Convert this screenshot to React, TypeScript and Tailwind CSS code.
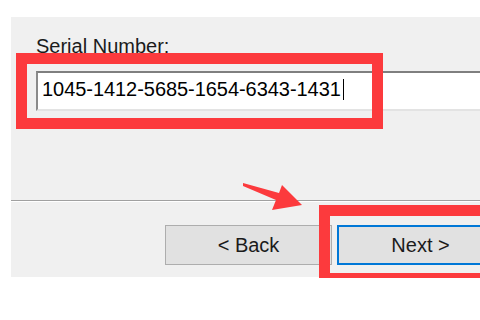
export default function App() {
  return (
    <div
      className="relative w-[480px] h-[320px] overflow-hidden bg-white text-black"
      style={{ fontFamily: '"Liberation Sans", Arial, sans-serif' }}
    >
      <div className="ml-[11px] mt-[17px] h-[260px] bg-[#f0f0f0] flex flex-col">
        <div className="pl-[25px] pt-[18px]">
          <div className="text-[20px] leading-[23px] text-[#1b1b1b]">Serial Number:</div>
          <div className="mt-[13px] h-[40px] w-[480px] bg-white border-t-2 border-l-2 border-b-2 border-t-[#7f7f7f] border-l-[#8a8a8a] border-b-[#e3e3e3] flex items-center pl-[4px] pb-[4px]">
            <span className="text-[20px] leading-[23px] tracking-[-0.05px]">1045-1412-5685-1654-6343-1431</span>
            <span className="ml-[2px] w-px h-[21px] bg-black" />
          </div>
        </div>

        <div className="mt-[89px] h-px bg-[#a0a0a0]" />
        <div className="h-px bg-white" />

        <div className="mt-[23px] flex pl-[154px] gap-[5px]">
          <button className="w-[167px] h-[40px] shrink-0 bg-[#e1e1e1] border border-[#adadad] text-[20px] text-[#1b1b1b]">
            &lt; Back
          </button>
          <button className="w-[167px] h-[40px] shrink-0 bg-[#e1e1e1] border-2 border-[#0078d7] text-[20px] text-[#1b1b1b]">
            Next &gt;
          </button>
        </div>
      </div>

      {/* annotation overlays */}
      <div className="absolute left-[16px] top-[53px] w-[367px] h-[76px] border-[11px] border-[#fc3a3d]" />
      <div className="absolute left-[319px] top-[205px] w-[200px] h-[73px] border-t-[11px] border-l-[11px] border-b-[5px] border-[#fc3a3d]" />
      <svg className="absolute left-0 top-0" width="480" height="320" viewBox="0 0 480 320">
        <polygon
          points="243,183 279,193 282,185 302,205 272,210 276,200 243,186"
          fill="#fc3a3d"
        />
      </svg>
    </div>
  );
}
